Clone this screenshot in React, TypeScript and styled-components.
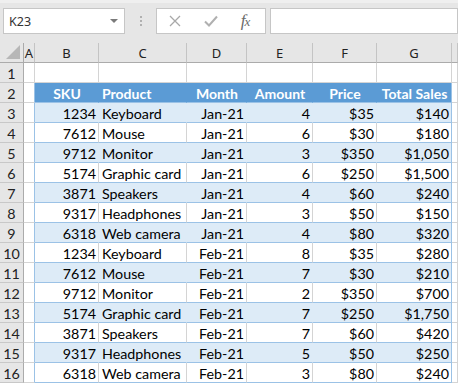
import React, {FC} from "react";
import styled, {createGlobalStyle} from "styled-components";

const GRID = "24px 11px 64px 88px 60px 66px 64px 75px 1fr";
const GRID_LINE = "#d4d4d4";
const TABLE_LINE = "#9bc2e6";
const HEAD_LINE = "#ababab";

const GlobalStyle = createGlobalStyle`
  html, body {
    margin: 0;
    padding: 0;
    background: #ffffff;
  }
  body {
    width: 458px;
    height: 383px;
    overflow: hidden;
    font-family: "Lato", "Liberation Sans", sans-serif;
  }
`;

const Page = styled.div`
  width: 458px;
  height: 383px;
  overflow: hidden;
  display: flex;
  flex-flow: column;
`;

const Toolbar = styled.div`
  height: 43px;
  flex: none;
  box-sizing: border-box;
  padding: 8px 0 9px 3px;
  display: flex;
  align-items: stretch;
  background: linear-gradient(#efefef 0, #efefef 3px, #e6e6e6 3px);
`;

const Box = styled.div<{ $width?: number }>`
  box-sizing: border-box;
  background: #ffffff;
  border: 1px solid #c6c6c6;
  display: flex;
  align-items: center;
  ${p => p.$width ? `width: ${p.$width}px; flex: none;` : "flex: 1;"}
`;

const NameText = styled.span`
  flex: 1;
  padding-left: 5px;
  font-family: "Noto Sans", "Liberation Sans", sans-serif;
  font-size: 12.5px;
  color: #333333;
`;

const Arrow = styled.span`
  width: 0;
  height: 0;
  margin-right: 6px;
  border-left: 4px solid transparent;
  border-right: 4px solid transparent;
  border-top: 4px solid #7a7a7a;
`;

const Separator = styled.div`
  width: 31px;
  flex: none;
  display: flex;
  align-items: center;
  justify-content: center;
`;

const Dot = styled.span`
  display: block;
  width: 2px;
  height: 2px;
  margin: 1px 0;
  background: #b0b0b0;
`;

const DotStack = styled.div`
  display: flex;
  flex-flow: column;
`;

const IconButton = styled.div`
  width: 36px;
  flex: none;
  display: flex;
  align-items: center;
  justify-content: center;
`;

const Fx = styled.span`
  font-family: "Liberation Serif", "DejaVu Serif", serif;
  font-style: italic;
  font-size: 17px;
  color: #6a6a6a;
  letter-spacing: -1px;
  margin-right: 4px;
`;

const FxSub = styled.span`
  font-size: 13px;
`;

const Gap = styled.div`
  width: 4px;
  flex: none;
`;

const Sheet = styled.div`
  flex: 1;
  display: flex;
  flex-flow: column;
`;

const Row = styled.div`
  display: grid;
  grid-template-columns: ${GRID};
  height: 20px;
  flex: none;
`;

type Fill = "none" | "band" | "head";

const Cell = styled.div<{
    $align?: "left" | "right" | "center";
    $fill?: Fill;
    $right?: string;
    $bottom?: string;
}>`
  box-sizing: border-box;
  height: 20px;
  padding: 1px 2px 0 3px;
  display: flex;
  align-items: center;
  justify-content: ${p => p.$align === "right" ? "flex-end" : p.$align === "center" ? "center" : "flex-start"};
  white-space: nowrap;
  overflow: hidden;
  font-size: ${p => p.$fill === "head" ? "14px" : "14.3px"};
  font-weight: ${p => p.$fill === "head" ? 700 : 400};
  color: ${p => p.$fill === "head" ? "#ffffff" : "#000000"};
  background: ${p => p.$fill === "head" ? "#5b9bd5" : p.$fill === "band" ? "#ddebf7" : "#ffffff"};
  border-right: 1px solid ${p => p.$right || GRID_LINE};
  border-bottom: 1px solid ${p => p.$bottom || GRID_LINE};
`;

const HeaderCell = styled.div<{ $corner?: boolean }>`
  box-sizing: border-box;
  height: 20px;
  display: flex;
  align-items: center;
  justify-content: center;
  position: relative;
  background: #e6e6e6;
  font-family: "Noto Sans", "Liberation Sans", sans-serif;
  font-size: 13px;
  color: #222222;
  border-right: 1px solid ${p => p.$corner ? HEAD_LINE : "#c4c4c4"};
  border-bottom: 1px solid ${HEAD_LINE};
`;

const Corner = styled.span`
  position: absolute;
  right: 3px;
  bottom: 3px;
  width: 0;
  height: 0;
  border-left: 14px solid transparent;
  border-bottom: 14px solid #b7b7b7;
`;

const RowNumber = styled.div`
  box-sizing: border-box;
  height: 20px;
  padding-top: 1px;
  display: flex;
  align-items: center;
  justify-content: center;
  background: #e6e6e6;
  font-size: 14.3px;
  color: #222222;
  border-right: 1px solid ${HEAD_LINE};
  border-bottom: 1px solid #c8c8c8;
`;

const COLUMNS = ["A", "B", "C", "D", "E", "F", "G", ""];

const HEADERS: { label: string; align: "left" | "center" }[] = [
    {label: "SKU", align: "center"},
    {label: "Product", align: "left"},
    {label: "Month", align: "center"},
    {label: "Amount", align: "center"},
    {label: "Price", align: "center"},
    {label: "Total Sales", align: "center"},
];

const ROWS: [number, string, string, number, string, string][] = [
    [1234, "Keyboard", "Jan-21", 4, "$35", "$140"],
    [7612, "Mouse", "Jan-21", 6, "$30", "$180"],
    [9712, "Monitor", "Jan-21", 3, "$350", "$1,050"],
    [5174, "Graphic card", "Jan-21", 6, "$250", "$1,500"],
    [3871, "Speakers", "Jan-21", 4, "$60", "$240"],
    [9317, "Headphones", "Jan-21", 3, "$50", "$150"],
    [6318, "Web camera", "Jan-21", 4, "$80", "$320"],
    [1234, "Keyboard", "Feb-21", 8, "$35", "$280"],
    [7612, "Mouse", "Feb-21", 7, "$30", "$210"],
    [9712, "Monitor", "Feb-21", 2, "$350", "$700"],
    [5174, "Graphic card", "Feb-21", 7, "$250", "$1,750"],
    [3871, "Speakers", "Feb-21", 7, "$60", "$420"],
    [9317, "Headphones", "Feb-21", 5, "$50", "$250"],
    [6318, "Web camera", "Feb-21", 3, "$80", "$240"],
];

const ALIGN: ("left" | "right")[] = ["right", "left", "right", "right", "right", "right"];

const CrossIcon: FC = () => (
    <svg width="12" height="12" viewBox="0 0 12 12">
        <path d="M1 1 L11 11 M11 1 L1 11" stroke="#a8a8a8" strokeWidth="1.3" fill="none"/>
    </svg>
);

const CheckIcon: FC = () => (
    <svg width="14" height="12" viewBox="0 0 14 12">
        <path d="M1 6.5 L5 10.5 L13 1.5" stroke="#b0b0b0" strokeWidth="2" fill="none"/>
    </svg>
);

const FormulaBar: FC = () => (
    <Toolbar>
        <Box $width={122}>
            <NameText>K23</NameText>
            <Arrow/>
        </Box>
        <Separator>
            <DotStack>
                <Dot/><Dot/><Dot/>
            </DotStack>
        </Separator>
        <Box $width={110}>
            <IconButton><CrossIcon/></IconButton>
            <IconButton><CheckIcon/></IconButton>
            <IconButton><Fx>f<FxSub>x</FxSub></Fx></IconButton>
        </Box>
        <Gap/>
        <Box/>
    </Toolbar>
);

const App: FC = () => {
    return (
        <Page>
            <GlobalStyle/>
            <FormulaBar/>
            <Sheet>
                <Row>
                    <HeaderCell $corner><Corner/></HeaderCell>
                    {COLUMNS.map((c, i) => <HeaderCell key={i}>{c}</HeaderCell>)}
                </Row>
                <Row>
                    <RowNumber>1</RowNumber>
                    {COLUMNS.map((c, i) => <Cell key={i}/>)}
                </Row>
                <Row>
                    <RowNumber>2</RowNumber>
                    <Cell $right={TABLE_LINE}/>
                    {HEADERS.map((h, i) => (
                        <Cell
                            key={h.label}
                            $fill="head"
                            $align={h.align}
                            $right={i === HEADERS.length - 1 ? TABLE_LINE : "#5b9bd5"}
                            $bottom={TABLE_LINE}
                        >
                            {h.label}
                        </Cell>
                    ))}
                    <Cell/>
                </Row>
                {ROWS.map((r, ri) => {
                    const fill: Fill = ri % 2 === 0 ? "band" : "none";
                    return (
                        <Row key={ri}>
                            <RowNumber>{ri + 3}</RowNumber>
                            <Cell $right={TABLE_LINE}/>
                            {r.map((v, ci) => (
                                <Cell
                                    key={ci}
                                    $fill={fill}
                                    $align={ALIGN[ci]}
                                    $right={ci === r.length - 1 ? TABLE_LINE : fill === "band" ? "#ddebf7" : GRID_LINE}
                                    $bottom={TABLE_LINE}
                                >
                                    {v}
                                </Cell>
                            ))}
                            <Cell/>
                        </Row>
                    );
                })}
            </Sheet>
        </Page>
    );
};

export default App;
